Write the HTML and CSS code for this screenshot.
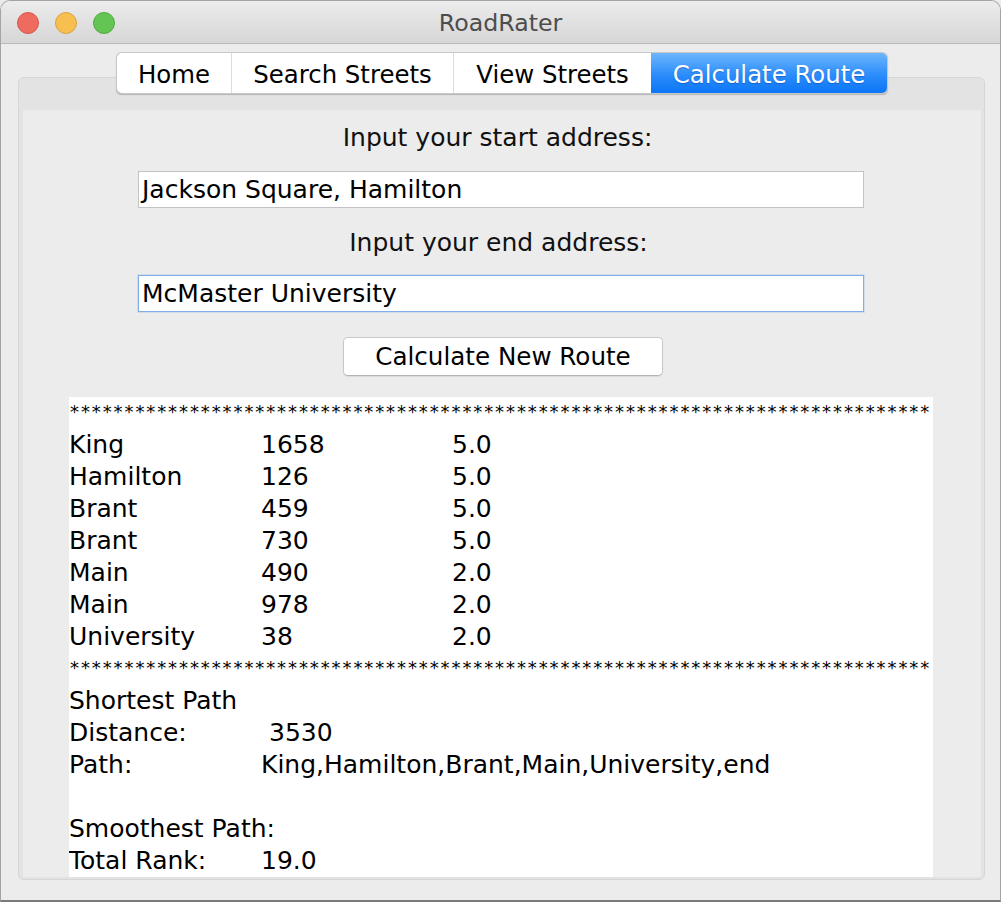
FILE: index.html
```html
<!DOCTYPE html>
<html>
<head>
<meta charset="utf-8">
<title>RoadRater</title>
<link rel="stylesheet" href="styles.css">
</head>
<body>
<div class="window">
  <div class="titlebar">
    <div class="lights">
      <span class="light red"></span>
      <span class="light yellow"></span>
      <span class="light green"></span>
    </div>
    <div class="title">RoadRater</div>
  </div>
  <div class="body">
    <div class="tabpane">
      <div class="tabs">
        <div class="tab t-home">Home</div>
        <div class="tab t-search">Search Streets</div>
        <div class="tab t-view">View Streets</div>
        <div class="tab t-calc selected">Calculate Route</div>
      </div>
      <div class="content">
        <div class="label first">Input your start address:</div>
        <div class="field">Jackson Square, Hamilton</div>
        <div class="label second">Input your end address:</div>
        <div class="field focused">McMaster University</div>
        <div class="button">Calculate New Route</div>
        <div class="output">
          <div class="stars">*******************************************************************************</div>
          <div class="row"><span>King</span><span>1658</span><span>5.0</span></div>
          <div class="row"><span>Hamilton</span><span>126</span><span>5.0</span></div>
          <div class="row"><span>Brant</span><span>459</span><span>5.0</span></div>
          <div class="row"><span>Brant</span><span>730</span><span>5.0</span></div>
          <div class="row"><span>Main</span><span>490</span><span>2.0</span></div>
          <div class="row"><span>Main</span><span>978</span><span>2.0</span></div>
          <div class="row"><span>University</span><span>38</span><span>2.0</span></div>
          <div class="stars">*******************************************************************************</div>
          <div class="line">Shortest Path</div>
          <div class="row"><span>Distance:</span><span class="space">3530</span></div>
          <div class="row"><span>Path:</span><span>King,Hamilton,Brant,Main,University,end</span></div>
          <div class="line">&nbsp;</div>
          <div class="line">Smoothest Path:</div>
          <div class="row"><span>Total Rank:</span><span>19.0</span></div>
        </div>
      </div>
    </div>
  </div>
</div>
</body>
</html>
```

FILE: styles.css
```css
html, body {
  margin: 0;
  padding: 0;
  background: #ececec;
}

body {
  font-family: "DejaVu Sans", "Liberation Sans", sans-serif;
  color: #000;
}

.window {
  width: 1001px;
  height: 902px;
  box-sizing: border-box;
  border: 1px solid #a4a4a4;
  border-bottom: 2px solid #7a7a7a;
  border-radius: 10px 10px 0 0;
  background: #ececec;
  overflow: hidden;
  display: flex;
  flex-direction: column;
}

.titlebar {
  height: 43px;
  flex: none;
  box-sizing: border-box;
  border-bottom: 1px solid #b9b9b9;
  background: linear-gradient(#ececec, #d6d6d6);
  display: flex;
  align-items: center;
  position: relative;
}

.lights {
  display: flex;
  gap: 16px;
  padding-left: 16px;
  padding-top: 1px;
}

.light {
  width: 22px;
  height: 22px;
  border-radius: 50%;
  box-sizing: border-box;
  display: block;
}

.red { background: #ef6b60; border: 1px solid #d9534c; }
.yellow { background: #f6bf4f; border: 1px solid #d9a43f; }
.green { background: #62c554; border: 1px solid #50a93f; }

.title {
  position: absolute;
  left: 0;
  right: 0;
  top: 0;
  bottom: 0;
  display: flex;
  align-items: center;
  justify-content: center;
  font-size: 23.7px;
  color: #4d4d4d;
  padding-top: 1px;
}

.body {
  flex: 1;
  padding: 33px 15px 23px 17px;
  display: flex;
}

.tabpane {
  flex: 1;
  border: 1px solid #d6d6d6;
  border-radius: 6px;
  background: #e3e3e3;
  padding: 0 3px 2px 4px;
  display: flex;
  flex-direction: column;
}

.tabs {
  align-self: center;
  margin-top: -25px;
  height: 40px;
  display: flex;
  background: #fff;
  border-radius: 5px;
  box-shadow: 0 0 0 1px #c8c8c8, 0 1px 1px 0.5px #b4b4b4;
  position: relative;
  z-index: 1;
}

.tab {
  box-sizing: border-box;
  display: flex;
  align-items: center;
  justify-content: center;
  font-size: 24.4px;
  padding-top: 2px;
  color: #000;
  border-left: 1px solid #dcdcdc;
  white-space: nowrap;
}

.t-home { width: 114px; border-left: none; border-radius: 5px 0 0 5px; }
.t-search { width: 222px; }
.t-view { width: 198px; }
.t-calc { width: 236px; }

.tab.selected {
  border-left: none;
  border-radius: 0 5px 5px 0;
  background: linear-gradient(#6db6fb, #2b8cfb 55%, #0b76f6);
  color: #fff;
  text-shadow: 0 1px 1px rgba(0, 40, 120, 0.35);
}

.content {
  margin-top: 17px;
  flex: 1;
  background: #ececec;
  display: flex;
  flex-direction: column;
  align-items: center;
  overflow: hidden;
}

.label {
  font-size: 25px;
  line-height: 32px;
  color: #111;
}

.label.first { margin-top: 12px; margin-left: -9px; }
.label.second { margin-top: 19px; margin-left: -7px; }

.field {
  margin-top: 17px;
  width: 726px;
  height: 37px;
  box-sizing: border-box;
  background: #fff;
  border: 1px solid #c3c3c3;
  font-size: 25px;
  line-height: 36px;
  padding-left: 3px;
  white-space: nowrap;
  margin-left: -2px;
}

.field.focused {
  margin-top: 16px;
  border-color: #82aee8;
  box-shadow: 0 0 0 1px rgba(130, 174, 232, 0.25);
}

.button {
  margin-top: 25px;
  width: 320px;
  height: 39px;
  box-sizing: border-box;
  background: #fff;
  border: 1px solid #c8c8c8;
  border-bottom-color: #b4b4b4;
  border-radius: 5px;
  box-shadow: 0 1px 1px rgba(0, 0, 0, 0.08);
  font-size: 24.6px;
  display: flex;
  align-items: center;
  justify-content: center;
  margin-left: 2px;
}

.output {
  margin-top: 21px;
  width: 864px;
  flex: 1;
  background: #fff;
  font-size: 25px;
  line-height: 32px;
  overflow: hidden;
  margin-left: -2px;
}

.stars {
  white-space: nowrap;
  font-size: 18px;
  letter-spacing: 1.9px;
  height: 32px;
  line-height: 30px;
  padding-left: 1px;
}

.row {
  display: grid;
  grid-template-columns: 192px 191px auto;
  white-space: nowrap;
}

.line {
  white-space: nowrap;
}

.space {
  padding-left: 8px;
}
```
